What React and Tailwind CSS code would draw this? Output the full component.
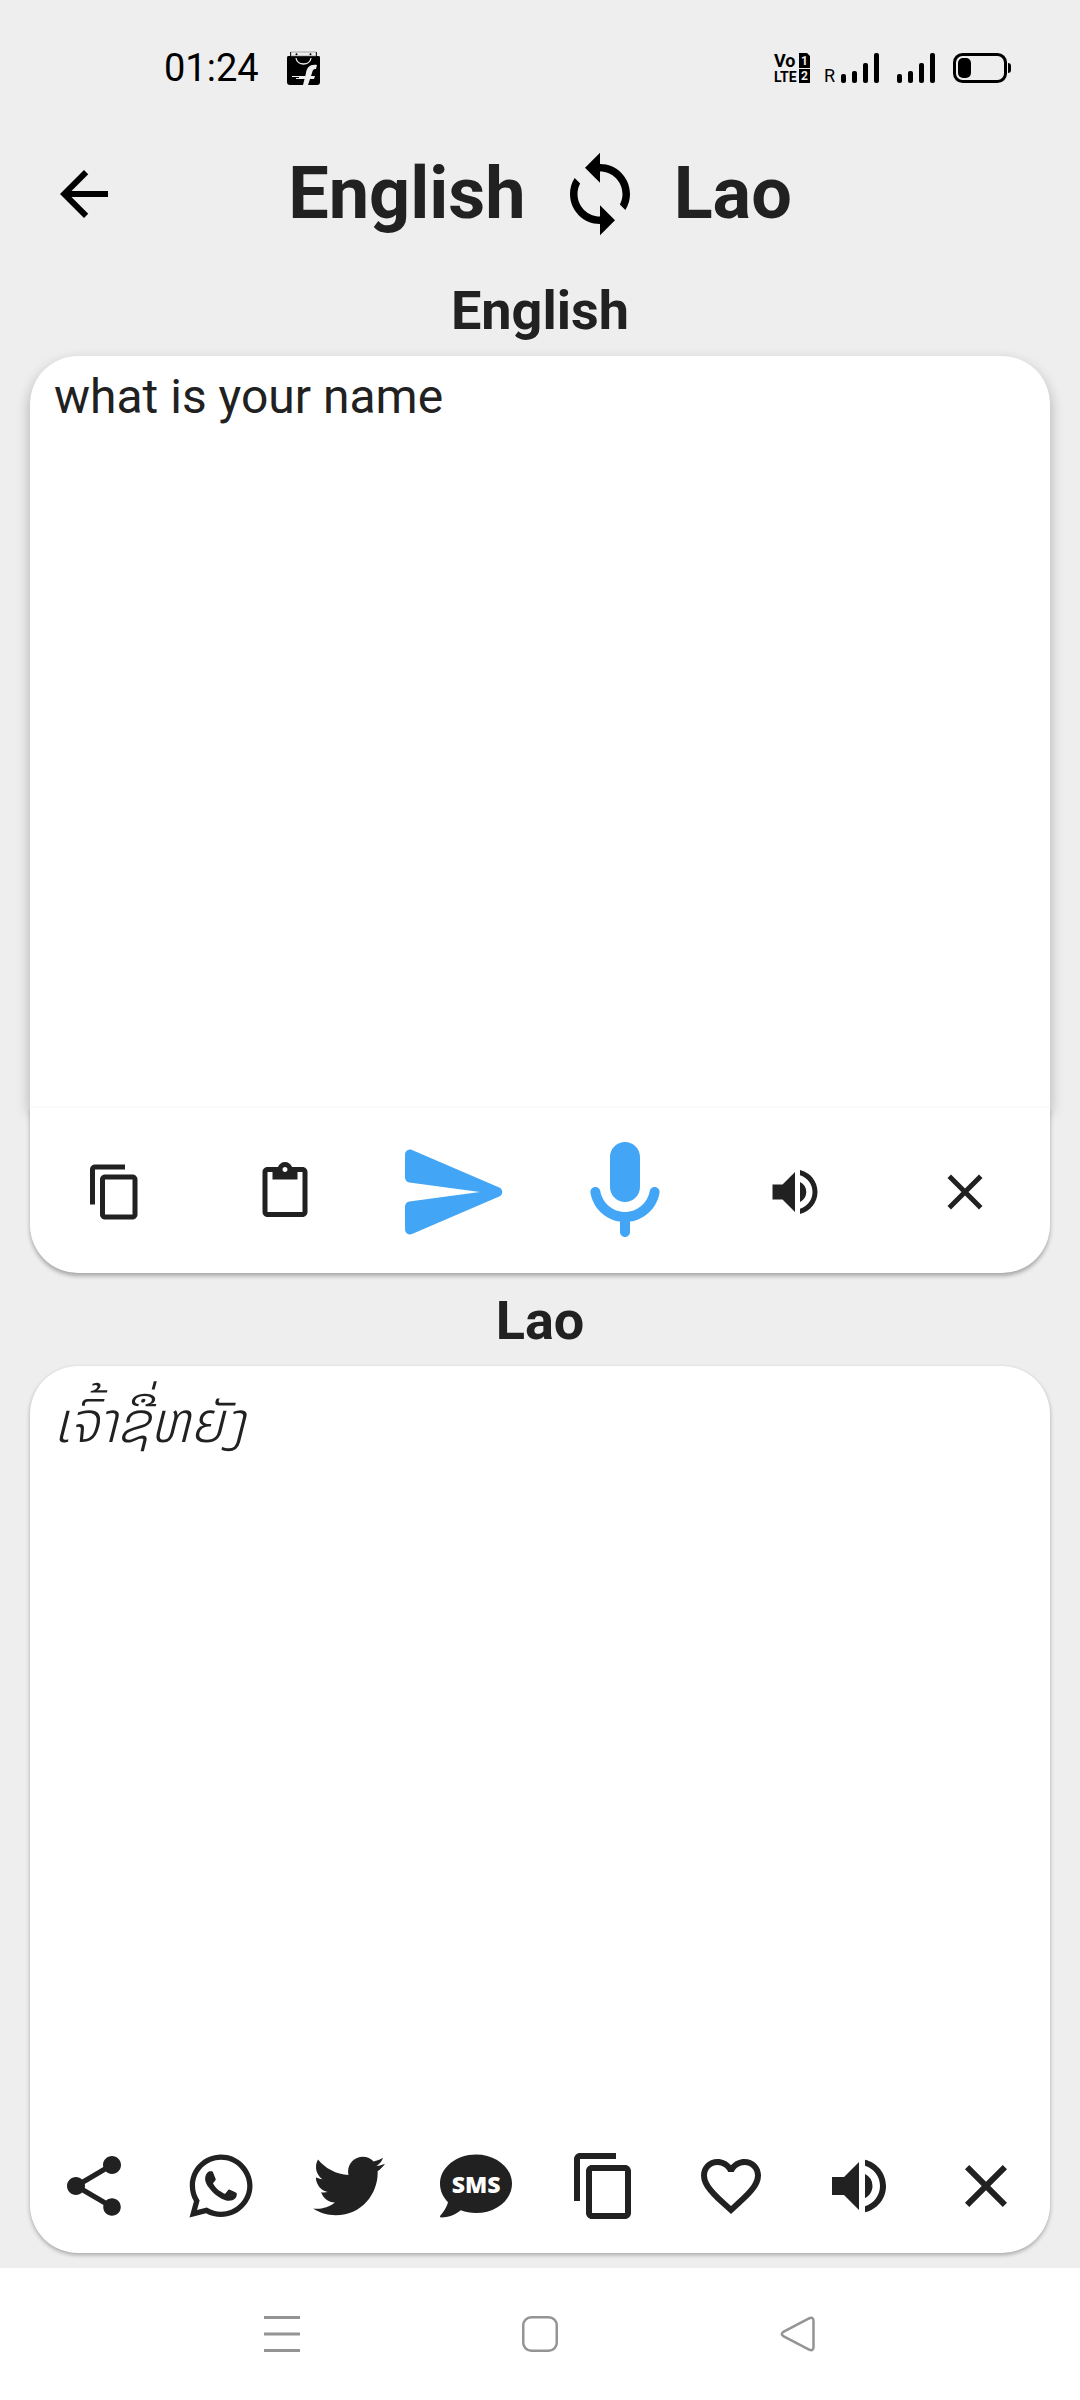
import React, { useState } from 'react';
import {
  MdArrowBack,
  MdClose,
  MdContentCopy,
  MdContentPaste,
  MdFavoriteBorder,
  MdShare,
  MdSync,
  MdVolumeUp,
} from 'react-icons/md';
import { FaComment, FaTwitter, FaWhatsapp } from 'react-icons/fa';

const SendIcon = () => (
  <svg viewBox="0 0 24 24" fill="currentColor" className="size-[120px]" aria-hidden="true">
    <path d="M3.4 20.4l17.45-7.48c.81-.35.81-1.49 0-1.84L3.4 3.6c-.66-.29-1.39.2-1.39.91L2 9.12c0 .5.37.93.87.99L17 12 2.87 13.88c-.5.07-.87.5-.87 1l.01 4.61c0 .71.73 1.2 1.39.91z" />
  </svg>
);

const MicIcon = () => (
  <svg viewBox="0 0 24 24" fill="currentColor" className="size-[120px]" aria-hidden="true">
    <path d="M12 14c1.66 0 3-1.34 3-3V5c0-1.66-1.34-3-3-3S9 3.34 9 5v6c0 1.66 1.34 3 3 3zm5.91-3c-.49 0-.9.36-.98.85C16.52 14.2 14.47 16 12 16s-4.52-1.8-4.93-4.15c-.08-.49-.49-.85-.98-.85-.61 0-1.09.54-1 1.14.49 3 2.89 5.35 5.91 5.78V20c0 .55.45 1 1 1s1-.45 1-1v-2.08c3.02-.43 5.42-2.78 5.91-5.78.1-.6-.39-1.14-1-1.14z" />
  </svg>
);

const SmsIcon = () => (
  <span className="relative flex items-center justify-center">
    <FaComment className="size-[72px]" />
    <span className="absolute pb-1 font-['Noto_Sans',sans-serif] text-[23px] leading-none font-black text-white">
      SMS
    </span>
  </span>
);

const ShopIcon = () => (
  <svg viewBox="0 0 33 34" className="h-[34px] w-[33px]" aria-hidden="true">
    <path d="M3 1h27v4h2q1 0 1 2v24q0 3-3 3H3q-3 0-3-3V7q0-2 1-2h2z" fill="#000" />
    <path d="M4 1h25v4H4z" fill="#eee" stroke="#777" strokeWidth="0.6" />
    <circle cx="9.5" cy="3.2" r="1" />
    <circle cx="23.5" cy="3.2" r="1" />
    <path d="M9 7c1 8 14 8 15 0" fill="none" stroke="#eee" strokeWidth="1.3" />
    <path d="M30 14c-7-1-10 2-11 8l-1 4-2 8h5l2-6h4l1-3h-4l1-3c1-3 1-4 4-4z" fill="#eee" />
    <path d="M5 25h13v3H9v-1h3v-1H5z" fill="#eee" />
  </svg>
);

const VolteIcon = () => (
  <svg viewBox="0 0 36 30" className="h-[30px] w-[36px] overflow-visible" aria-hidden="true">
    <g className="font-[Roboto,sans-serif] font-bold">
      <text x="0" y="14" fontSize="18">Vo</text>
      <text x="0" y="29" fontSize="14">LTE</text>
      <path d="M25 0h8l3 3v12H25zM25 16h11v14H25z" />
      <text x="27" y="12" fontSize="12" fill="#eee">1</text>
      <text x="27" y="27" fontSize="12" fill="#eee">2</text>
    </g>
  </svg>
);

const SignalIcon = () => (
  <svg viewBox="0 0 38 30" className="h-[30px] w-[38px]" aria-hidden="true">
    <rect x="0" y="21" width="5" height="9" rx="2" />
    <rect x="11" y="18" width="5" height="12" rx="2" />
    <rect x="22" y="10" width="5" height="20" rx="2" />
    <rect x="33" y="0" width="5" height="30" rx="2" />
  </svg>
);

const BatteryIcon = () => (
  <svg viewBox="0 0 58 30" className="h-[30px] w-[58px]" aria-hidden="true">
    <rect x="1.5" y="1.5" width="51" height="27" rx="8" fill="none" stroke="#000" strokeWidth="3" />
    <rect x="5" y="5" width="13" height="20" rx="5" />
    <path d="M55 10q3 0 3 3v4q0 3-3 3z" />
  </svg>
);

const StatusBar = () => (
  <div className="flex h-[110px] items-center justify-between pt-[26px] pr-[69px] pl-[164px] text-black">
    <div className="flex items-center gap-7">
      <span className="text-[38px] leading-none">01:24</span>
      <ShopIcon />
    </div>
    <div className="flex items-center gap-[18px]">
      <VolteIcon />
      <div className="-ml-1 flex items-end gap-1.5">
        <span className="text-[18px] leading-[14px]">R</span>
        <SignalIcon />
      </div>
      <SignalIcon />
      <BatteryIcon />
    </div>
  </div>
);

const IconButton = ({ label, className = '', children, onClick }) => (
  <button
    type="button"
    aria-label={label}
    onClick={onClick}
    className={`flex flex-1 cursor-pointer items-center justify-center ${className}`}
  >
    {children}
  </button>
);

const NavBar = () => (
  <nav className="flex h-[132px] items-center justify-center gap-[222px] bg-white text-[#949494]">
    <button type="button" aria-label="Recent apps">
      <svg viewBox="0 0 36 36" className="size-9" stroke="currentColor" strokeWidth="3">
        <path d="M0 1.5h36M0 18h36M0 34.5h36" />
      </svg>
    </button>
    <button type="button" aria-label="Home">
      <svg viewBox="0 0 36 36" className="size-9" fill="none" stroke="currentColor" strokeWidth="2.5">
        <rect x="1.25" y="1.25" width="33.5" height="33.5" rx="8" />
      </svg>
    </button>
    <button type="button" aria-label="Back">
      <svg viewBox="0 0 36 36" className="size-9" fill="none" stroke="currentColor" strokeWidth="2.5">
        <path d="M29.5 2.2 3.3 15.9q-3 2.1 0 4.2l26.2 13.7q4 1.4 4-2.8V5q0-4.2-4-2.8z" />
      </svg>
    </button>
  </nav>
);

const App = () => {
  const [source, setSource] = useState('what is your name');
  const [result, setResult] = useState('ເຈົ້າຊື່ຫຍັງ');

  return (
    <div className="flex min-h-screen flex-col bg-[#eeeeee] font-[Roboto,sans-serif] text-[#212121]">
      <StatusBar />

      <header className="grid h-[168px] grid-cols-[1fr_auto_1fr] items-center px-12">
        <button type="button" aria-label="Back" className="w-[72px] text-black">
          <MdArrowBack className="size-[72px]" />
        </button>
        <h1 className="flex items-center text-[72px] leading-none font-bold">
          English
          <button
            type="button"
            aria-label="Swap languages"
            className="flex w-[148px] items-center justify-center text-black"
          >
            <MdSync className="size-[90px]" />
          </button>
          Lao
        </h1>
      </header>

      <main className="flex flex-auto flex-col">
        {/* Source text */}
        <section className="flex flex-auto flex-col">
          <label htmlFor="source" className="mb-3 text-center text-[54px] leading-[66px] font-bold">
            English
          </label>
          <div className="mx-[30px] flex flex-auto flex-col">
            <textarea
              id="source"
              value={source}
              onChange={(e) => setSource(e.target.value)}
              className="block h-40 flex-auto resize-none rounded-t-[48px] bg-white px-6 pt-3 text-[48px] leading-[58px] shadow-[0_6px_14px_rgba(0,0,0,0.28)] outline-none"
            />
            <div className="relative flex h-[166px] rounded-b-[48px] border-t border-[#fafafa] bg-white pt-0.5 shadow-[0_3px_4px_rgba(0,0,0,0.3)]">
              <IconButton label="Copy"><MdContentCopy className="size-[60px]" /></IconButton>
              <IconButton label="Paste"><MdContentPaste className="size-[60px]" /></IconButton>
              <IconButton label="Translate" className="text-[#42a5f5]"><SendIcon /></IconButton>
              <IconButton label="Speak" className="text-[#42a5f5]"><MicIcon /></IconButton>
              <IconButton label="Listen"><MdVolumeUp className="size-[60px]" /></IconButton>
              <IconButton label="Clear" onClick={() => setSource('')}>
                <MdClose className="size-[60px]" />
              </IconButton>
            </div>
          </div>
        </section>

        {/* Translation */}
        <section className="mt-[15px] mb-[15px] flex flex-auto flex-col">
          <label htmlFor="result" className="mb-3 text-center text-[54px] leading-[66px] font-bold">
            Lao
          </label>
          <div className="mx-[30px] flex flex-auto flex-col rounded-[48px] bg-white shadow-[0_2px_4px_rgba(0,0,0,0.3)]">
            <textarea
              id="result"
              lang="lo"
              readOnly
              value={result}
              className="block h-40 flex-auto resize-none rounded-t-[48px] px-6 pt-6 font-[Roboto,'Noto_Sans_Lao','DejaVu_Sans',sans-serif] text-[57px] leading-[66px] font-light italic outline-none"
            />
            <div className="flex h-[136px] pt-0.5">
              <IconButton label="Share"><MdShare className="size-[72px]" /></IconButton>
              <IconButton label="WhatsApp"><FaWhatsapp className="size-[72px]" /></IconButton>
              <IconButton label="Twitter"><FaTwitter className="size-[72px]" /></IconButton>
              <IconButton label="SMS"><SmsIcon /></IconButton>
              <IconButton label="Copy translation"><MdContentCopy className="size-[72px]" /></IconButton>
              <IconButton label="Favourite"><MdFavoriteBorder className="size-[72px]" /></IconButton>
              <IconButton label="Listen to translation"><MdVolumeUp className="size-[72px]" /></IconButton>
              <IconButton label="Clear translation" onClick={() => setResult('')}>
                <MdClose className="size-[72px]" />
              </IconButton>
            </div>
          </div>
        </section>
      </main>

      <NavBar />
    </div>
  );
};

export default App;
